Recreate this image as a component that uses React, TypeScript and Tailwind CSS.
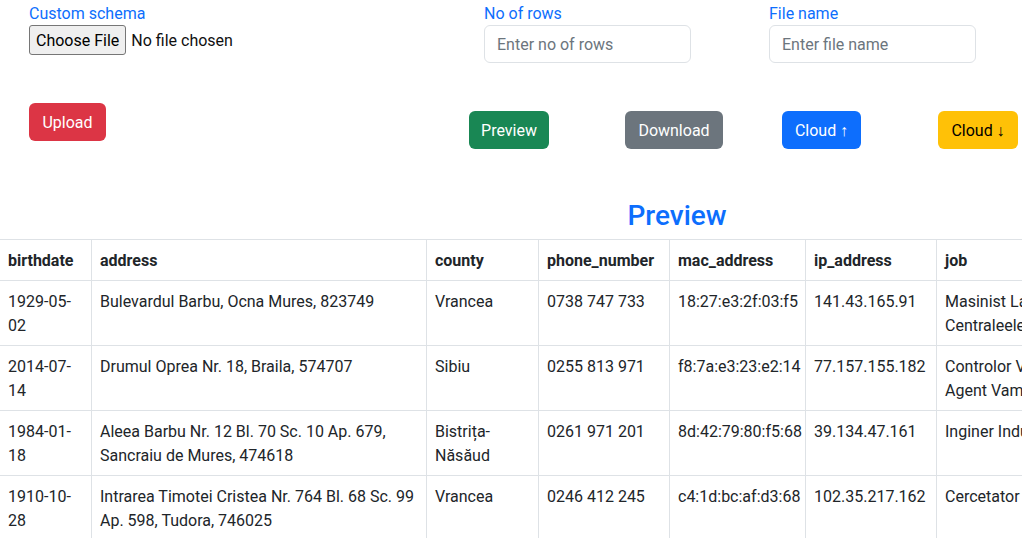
import React from "react";

type Row = {
  birthdate: string;
  address: string;
  county: string;
  phone: string;
  mac: string;
  ip: string;
  job: string;
  email: string;
};

const rows: Row[] = [
  {
    birthdate: "1929-05-02",
    address: "Bulevardul Barbu, Ocna Mures, 823749",
    county: "Vrancea",
    phone: "0738 747 733",
    mac: "18:27:e3:2f:03:f5",
    ip: "141.43.165.91",
    job: "Masinist La Masini Centraleele Electrice",
    email: "barbu.ana@example.ro",
  },
  {
    birthdate: "2014-07-14",
    address: "Drumul Oprea Nr. 18, Braila, 574707",
    county: "Sibiu",
    phone: "0255 813 971",
    mac: "f8:7a:e3:23:e2:14",
    ip: "77.157.155.182",
    job: "Controlor Vamal Si Agent Vamal",
    email: "oprea.ion@example.ro",
  },
  {
    birthdate: "1984-01-18",
    address: "Aleea Barbu Nr. 12 Bl. 70 Sc. 10 Ap. 679, Sancraiu de Mures, 474618",
    county: "Bistrița-Năsăud",
    phone: "0261 971 201",
    mac: "8d:42:79:80:f5:68",
    ip: "39.134.47.161",
    job: "Inginer Industrial",
    email: "elena.pop@example.ro",
  },
  {
    birthdate: "1910-10-28",
    address: "Intrarea Timotei Cristea Nr. 764 Bl. 68 Sc. 99 Ap. 598, Tudora, 746025",
    county: "Vrancea",
    phone: "0246 412 245",
    mac: "c4:1d:bc:af:d3:68",
    ip: "102.35.217.162",
    job: "Cercetator Stiintific",
    email: "cristea.t@example.ro",
  },
];

const th = "border border-[#dee2e6] px-2 pt-[9px] pb-[7px] text-left align-top font-bold";
const td = "border border-[#dee2e6] px-2 pt-[9px] pb-[7px] text-left align-top font-normal";
const btn = "h-[38px] pt-px rounded-[6px]";

export default function App() {
  return (
    <div className="w-[1022px] h-[538px] overflow-hidden bg-white text-[#212529] text-base leading-6 font-['Roboto',sans-serif]">
      <div className="w-[1354px]">
        <div className="flex">
          <div className="w-[469px] pl-[29px] pt-px flex flex-col items-start">
            <label className="text-[#0d6efd] leading-6 pt-px -mb-px">Custom schema</label>
            <input
              type="file"
              className="text-base leading-6 text-[#101010] file:mr-[5px] file:h-[30px] file:px-[6px] file:pt-px file:border file:border-solid file:border-[#767676] file:rounded-[3px] file:bg-[#efefef] file:text-black"
            />
            <button className={`${btn} mt-[48px] w-[77px] bg-[#dc3545] text-white`}>Upload</button>
          </div>
          <div className="flex-1 pt-px">
            <div className="flex">
              <div className="ml-[15px] w-[207px] flex flex-col">
                <label className="text-[#0d6efd] leading-6 pt-px -mb-px">No of rows</label>
                <input
                  placeholder="Enter no of rows"
                  className="h-[38px] w-[207px] border border-[#dee2e6] rounded-[6px] px-[12px] pt-px placeholder:text-[#6c757d] outline-none"
                />
              </div>
              <div className="ml-[78px] w-[207px] flex flex-col">
                <label className="text-[#0d6efd] leading-6 pt-px -mb-px">File name</label>
                <input
                  placeholder="Enter file name"
                  className="h-[38px] w-[207px] border border-[#dee2e6] rounded-[6px] px-[12px] pt-px placeholder:text-[#6c757d] outline-none"
                />
              </div>
            </div>
            <div className="flex mt-[48px]">
              <button className={`${btn} w-[80px] bg-[#198754] text-white`}>Preview</button>
              <button className={`${btn} ml-[76px] w-[98px] bg-[#6c757d] text-white`}>Download</button>
              <button className={`${btn} ml-[59px] w-[79px] bg-[#0d6efd] text-white`}>Cloud ↑</button>
              <button className={`${btn} ml-[77px] w-[80px] bg-[#ffc107] text-black`}>Cloud ↓</button>
            </div>
          </div>
        </div>

        <h2 className="mt-[49px] mb-[5px] text-center text-[28px] leading-[36px] font-medium text-[#0d6efd]">Preview</h2>

        <table className="-ml-px table-fixed border-collapse w-[1355px]">
          <thead>
            <tr>
              <th className={`${th} w-[92px]`}>birthdate</th>
              <th className={`${th} w-[335px]`}>address</th>
              <th className={`${th} w-[112px]`}>county</th>
              <th className={`${th} w-[131px]`}>phone_number</th>
              <th className={`${th} w-[136px]`}>mac_address</th>
              <th className={`${th} w-[131px]`}>ip_address</th>
              <th className={`${th} w-[175px]`}>job</th>
              <th className={th}>email</th>
            </tr>
          </thead>
          <tbody>
            {rows.map((r) => (
              <tr key={r.birthdate}>
                <td className={td}>{r.birthdate}</td>
                <td className={td}>{r.address}</td>
                <td className={td}>{r.county}</td>
                <td className={td}>{r.phone}</td>
                <td className={td}>{r.mac}</td>
                <td className={td}>{r.ip}</td>
                <td className={td}>{r.job}</td>
                <td className={td}>{r.email}</td>
              </tr>
            ))}
          </tbody>
        </table>
      </div>
    </div>
  );
}
